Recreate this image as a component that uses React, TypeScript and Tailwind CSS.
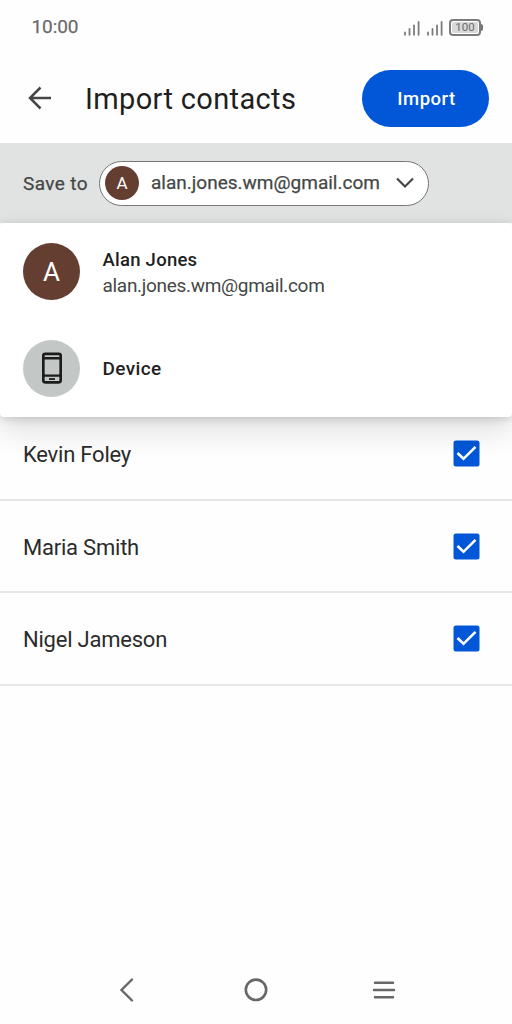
const contacts = ["Kevin Foley", "Maria Smith", "Nigel Jameson"];

function Signal() {
  return (
    <svg width="16" height="16" viewBox="0 0 16 16" stroke="#7c7c7c" strokeWidth="1.8" strokeLinecap="round">
      <path d="M1 11.4V13.8M5.5 8V13.8M10 4.4V13.8M14.6 1V13.8" />
    </svg>
  );
}

function Battery() {
  return (
    <div className="ml-[6px] flex items-center">
      <div className="flex h-[17px] w-8 items-center justify-center rounded-[4px] border-2 border-[#7c7c7c] p-px">
        <span className="flex h-full w-full items-center justify-center rounded-[2px] bg-[#d9d9d9] pt-[1.5px] text-[11.5px] leading-none">100</span>
      </div>
      <div className="h-[7px] w-[2px] rounded-r-sm bg-[#757575]" />
    </div>
  );
}

function StatusBar() {
  return (
    <div className="flex h-[54px] items-center justify-between pr-[29px] pl-[31.5px] text-[#6b6b6b]">
      <span className="pt-px text-[19px] tracking-[-0.1px] [-webkit-text-stroke:0.25px_#6b6b6b]">10:00</span>
      <div className="flex items-center">
        <div className="mt-[3px] flex gap-[7px]">
          <Signal />
          <Signal />
        </div>
        <Battery />
      </div>
    </div>
  );
}

function Header() {
  return (
    <header className="flex h-[89px] items-center pr-[23px] pl-7">
      <svg className="-mt-px" width="24" height="24" viewBox="0 0 24 24" fill="none" stroke="#444746" strokeWidth="2.5">
        <path d="M23 12H2.5M12.5 1.5L2 12L12.5 22.5" />
      </svg>
      <h1 className="ml-[33px] text-[29px] leading-9 tracking-[0.35px] text-[#1f1f1f]">Import contacts</h1>
      <button className="ml-auto h-[57px] w-[127px] rounded-full bg-[#0157d7] pt-[2px] pl-[2px] text-[18.5px] font-medium tracking-[0.5px] text-white">
        Import
      </button>
    </header>
  );
}

function SaveBar() {
  return (
    <div className="flex h-20 items-center bg-[#e1e3e2] pl-[23px] text-[#444746]">
      <span className="w-[76px] pt-[3px] text-[19px] tracking-[0.4px] [-webkit-text-stroke:0.25px_#444746]">Save to</span>
      <div className="flex h-[45px] w-[330px] items-center rounded-full border-[1.5px] border-[#747775] bg-white pl-[5px]">
        <span className="flex size-[34px] items-center justify-center rounded-full bg-[#653e32] pt-px text-[17px] text-white">A</span>
        <span className="ml-3 w-[230px] pt-px text-[19px] whitespace-nowrap [-webkit-text-stroke:0.25px_#444746]">alan.jones.wm@gmail.com</span>
        <svg className="ml-[15px]" width="18" height="12" viewBox="0 0 18 12" fill="none" stroke="#444746" strokeWidth="2.2">
          <path d="M1 1.5L9 9.5L17 1.5" />
        </svg>
      </div>
    </div>
  );
}

function AccountMenu() {
  return (
    <div className="absolute inset-x-0 top-0 h-[194px] rounded-[4px] bg-white shadow-[0_2px_8px_rgba(0,0,0,0.16),0_14px_30px_rgba(0,0,0,0.12)]">
      <div className="flex h-[97px] items-center gap-[22.5px] px-[23px]">
        <span className="flex size-[57px] items-center justify-center rounded-full bg-[#653e32] pt-[2px] text-[26px] text-white">A</span>
        <div className="pt-[2px] whitespace-nowrap">
          <div className="text-[18.5px] leading-[26px] font-medium tracking-[0.25px] text-[#1f1f1f]">Alan Jones</div>
          <div className="text-[19px] leading-[26px] tracking-[-0.3px] text-[#444746]">alan.jones.wm@gmail.com</div>
        </div>
      </div>
      <div className="flex h-[97px] items-center gap-[22.5px] px-[23px]">
        <span className="flex size-[57px] items-center justify-center rounded-full bg-[#c3c7c5]">
          <svg className="-mt-px" width="20" height="32" viewBox="0 0 20 32" fill="none" stroke="#1b1c1b">
            <rect x="1.3" y="1.8" width="17.4" height="28.6" rx="1.8" strokeWidth="2.7" />
            <path d="M1 6.2H19M1 23.6H19" strokeWidth="2.4" />
            <path d="M7 27H13" strokeWidth="1.8" />
          </svg>
        </span>
        <span className="pt-[2px] text-[19px] font-medium tracking-[0.35px] text-[#1f1f1f]">Device</span>
      </div>
    </div>
  );
}

function NavBar() {
  return (
    <nav className="mt-auto grid h-[68px] grid-cols-[1fr_128px_1fr] items-center">
      <svg className="mr-[57px] ml-auto" width="16" height="26" viewBox="0 0 16 26" fill="none" stroke="#676767" strokeWidth="2.4" strokeLinecap="round">
        <path d="M13 2.5L2.5 13L13 23.5" />
      </svg>
      <svg className="mx-auto" width="24" height="24" viewBox="0 0 24 24" fill="none" stroke="#676767" strokeWidth="2.6">
        <circle cx="12" cy="11.8" r="10.2" />
      </svg>
      <svg className="ml-[52px]" width="24" height="20" viewBox="0 0 24 20" stroke="#676767" strokeWidth="2.5" strokeLinecap="round">
        <path d="M3 2.8H21M2 10H22M3 17.2H21" />
      </svg>
    </nav>
  );
}

export default function App() {
  return (
    <main className="flex h-[1024px] w-[512px] flex-col overflow-hidden bg-[#fefefe] font-[Roboto,sans-serif]">
      <StatusBar />
      <Header />
      <SaveBar />
      <section className="relative pt-[185.5px]">
        <ul>
          {contacts.map((name) => (
            <li key={name} className="flex h-[92.4px] items-center justify-between border-b-2 border-[#e6e7e6] pr-8 pl-[23px]">
              <span className="pt-[2px] text-[22px] tracking-[-0.22px] text-[#2b2c2b]">{name}</span>
              <svg width="27" height="27" viewBox="0 0 27 27" fill="none">
                <rect x="0.5" y="0.5" width="26" height="26" rx="2.5" fill="#0157d7" />
                <path d="M4.5 13L10.5 18.8L22.5 6.8" stroke="white" strokeWidth="2.6" />
              </svg>
            </li>
          ))}
        </ul>
        <AccountMenu />
      </section>
      <NavBar />
    </main>
  );
}
